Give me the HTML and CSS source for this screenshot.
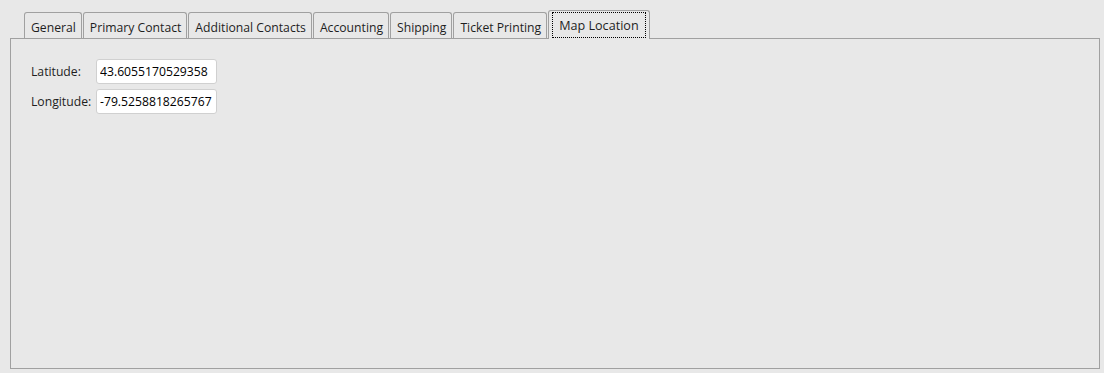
FILE: index.html
```html
<!DOCTYPE html>
<html lang="en">
<head>
  <meta charset="UTF-8">
  <title>Customer - Map Location</title>
  <link rel="stylesheet" href="styles.css">
</head>
<body>
  <div class="tab-bar">
    <div class="tab">General</div>
    <div class="tab">Primary Contact</div>
    <div class="tab">Additional Contacts</div>
    <div class="tab">Accounting</div>
    <div class="tab">Shipping</div>
    <div class="tab">Ticket Printing</div>
    <div class="tab active"><span class="focus">Map Location</span></div>
  </div>

  <div class="tab-panel">
    <div class="form">
      <label for="lat">Latitude:</label>
      <input id="lat" class="field" type="text" value="43.6055170529358">
      <label for="lng">Longitude:</label>
      <input id="lng" class="field" type="text" value="-79.5258818265767">
    </div>
  </div>
</body>
</html>
```

FILE: styles.css
```css
body {
  margin: 0;
  background-color: #e8e8e8;
  font-family: "Open Sans", "Noto Sans", sans-serif;
  font-size: 12.2px;
  color: #1e1e1e;
  height: 373px;
}
.tab-bar {
  display: flex;
  align-items: flex-end;
  padding: 10px 0 0 24px;
  height: 28px;
  position: relative;
  z-index: 1;
}
.tab {
  box-sizing: border-box;
  height: 26px;
  line-height: 22px;
  padding: 4px 5px 0 6px;
  margin-right: 1px;
  border: 1px solid #a0a0a0;
  border-bottom: none;
  border-radius: 3px 3px 0 0;
  background-color: #e8e8e8;
  white-space: nowrap;
}
.tab.active {
  height: 29px;
  margin-bottom: -1px;
  margin-left: 0;
  padding: 2px 4px;
  line-height: 25px;
  font-size: 12.6px;
}
.tab.active .focus {
  display: block;
  height: 24px;
  padding: 0 6px;
  outline: 1px dotted #000;
  outline-offset: 0;
}
.tab-panel {
  box-sizing: border-box;
  margin-left: 10px;
  width: 1090px;
  height: 331px;
  border: 1px solid #a0a0a0;
  padding: 20px;
}
.form {
  display: grid;
  grid-template-columns: 65px 121px;
  row-gap: 5px;
  align-items: center;
}
.form label {
  white-space: nowrap;
}
.field {
  box-sizing: border-box;
  width: 121px;
  height: 25px;
  margin: 0;
  padding: 0 3px;
  border: 1px solid #d0d0d0;
  border-radius: 3px;
  background: #fff;
  font-family: inherit;
  font-size: 12.2px;
  color: #000;
}
```
